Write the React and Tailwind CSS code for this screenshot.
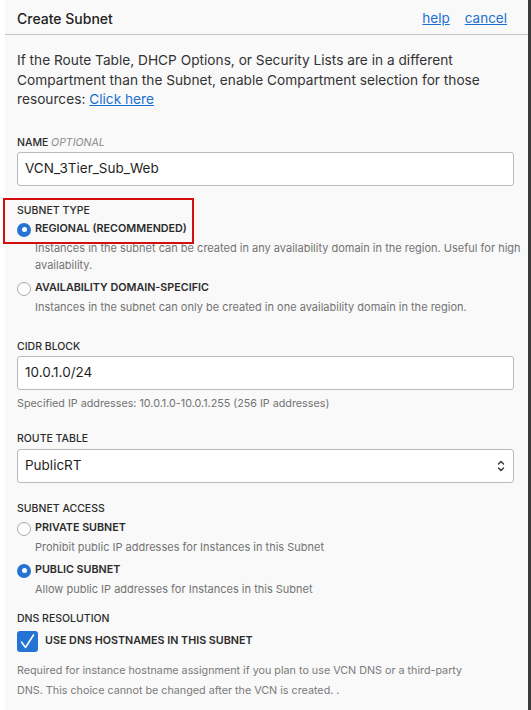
import React from "react";

function Radio({ checked }) {
  return checked ? (
    <span className="w-[14px] h-[14px] rounded-full bg-[#2574d4] flex items-center justify-center shrink-0">
      <span className="w-[5px] h-[5px] rounded-full bg-white" />
    </span>
  ) : (
    <span className="w-[14px] h-[14px] rounded-full bg-white border border-[#a9a9ae] shrink-0" />
  );
}

function Label({ children, className = "" }) {
  return (
    <div className={`h-4 leading-4 text-[10.5px] font-medium text-[#2b2b2b] uppercase ${className}`}>
      {children}
    </div>
  );
}

function Option({ checked, title, desc, className = "" }) {
  return (
    <div className={className}>
      <div className="h-5 flex items-center gap-[4px]">
        <Radio checked={checked} />
        <span className="text-[10.75px] font-semibold text-[#2b2b2b]">{title}</span>
      </div>
      <div className="pl-[18px] mr-[-12px] text-[11px] leading-[17px] text-[#737373]">{desc}</div>
    </div>
  );
}

function Field({ value, select, className = "" }) {
  return (
    <div className={`h-[34px] bg-white border border-[#b9b9c0] rounded-[3px] flex items-center pl-[7px] pr-[8px] text-[13.5px] text-[#1f1f1f] ${className}`}>
      <span className="flex-1">{value}</span>
      {select && (
        <svg width="8" height="14" viewBox="0 0 8 14" fill="none" stroke="#333" strokeWidth="1.4" strokeLinecap="round" strokeLinejoin="round">
          <path d="M1.5 5 L4 2.5 L6.5 5" />
          <path d="M1.5 9 L4 11.5 L6.5 9" />
        </svg>
      )}
    </div>
  );
}

export default function App() {
  return (
    <div className="w-[531px] h-[710px] flex overflow-hidden relative" style={{ fontFamily: "Inter, 'Noto Sans', sans-serif" }}>
      <div className="w-[5px] bg-white" />
      <div className="flex-1 bg-[#f9f9f9] flex flex-col">
        <div className="h-[35px] shrink-0 border-b border-[#c4c4c8] flex items-center pt-[2px] pl-[12px] pr-[21px]">
          <span className="flex-1 text-[14px] font-medium text-[#222]">Create Subnet</span>
          <a className="text-[13.5px] text-[#1a6fd1] underline mr-[15px]">help</a>
          <a className="text-[13.5px] text-[#1a6fd1] underline">cancel</a>
        </div>

        <div className="pl-[12px] pr-[14px] pt-[16px]">
          <p className="text-[13.7px] leading-[19.5px] text-[#333] pr-[10px]">
            If the Route Table, DHCP Options, or Security Lists are in a different Compartment than the Subnet, enable Compartment selection for those resources:{" "}
            <a className="text-[#1a6fd1] underline">Click here</a>
          </p>

          <Label className="mt-[25px]">
            Name <span className="italic font-normal text-[#8a8a8a]">Optional</span>
          </Label>
          <Field className="mt-[1px]" value="VCN_3Tier_Sub_Web" />

          <Label className="mt-[17px]">Subnet Type</Label>
          <Option
            className="mt-[1px]"
            checked
            title="REGIONAL (RECOMMENDED)"
            desc="Instances in the subnet can be created in any availability domain in the region. Useful for high availability."
          />
          <Option
            className="mt-[5px]"
            title="AVAILABILITY DOMAIN-SPECIFIC"
            desc="Instances in the subnet can only be created in one availability domain in the region."
          />

          <Label className="mt-[23px]">CIDR Block</Label>
          <Field className="mt-[1px]" value="10.0.1.0/24" />
          <div className="mt-[6px] text-[10.75px] leading-4 text-[#737373]">
            Specified IP addresses: 10.0.1.0-10.0.1.255 (256 IP addresses)
          </div>

          <Label className="mt-[19px]">Route Table</Label>
          <Field className="mt-[2px]" value="PublicRT" select />

          <Label className="mt-[18px]">Subnet Access</Label>
          <Option
            className="mt-[2px]"
            title="PRIVATE SUBNET"
            desc="Prohibit public IP addresses for Instances in this Subnet"
          />
          <Option
            className="mt-[5px]"
            checked
            title="PUBLIC SUBNET"
            desc="Allow public IP addresses for Instances in this Subnet"
          />

          <Label className="mt-[13px]">DNS Resolution</Label>
          <div className="mt-[4px] h-[21px] flex items-center gap-[7px]">
            <span className="w-[21px] h-[21px] rounded-[3px] bg-[#2574d4] flex items-center justify-center">
              <svg width="21" height="21" viewBox="0 0 21 21" fill="none" stroke="white" strokeWidth="1.5" strokeLinecap="round" strokeLinejoin="round">
                <path d="M4.5 11 L8.5 16.5 L16.5 4" />
              </svg>
            </span>
            <span className="text-[10.75px] font-semibold text-[#2b2b2b]">USE DNS HOSTNAMES IN THIS SUBNET</span>
          </div>
          <p className="mt-[9px] text-[10.75px] leading-5 text-[#7a7a7a]">
            Required for instance hostname assignment if you plan to use VCN DNS or a third-party
            <br />
            DNS. This choice cannot be changed after the VCN is created. .
          </p>
        </div>
      </div>
      <div className="w-[3px] bg-[#3a3a3a]" />
      <div className="absolute left-[3px] top-[198px] w-[191px] h-[46px] border-2 border-[#d40d0d] pointer-events-none" />
    </div>
  );
}
